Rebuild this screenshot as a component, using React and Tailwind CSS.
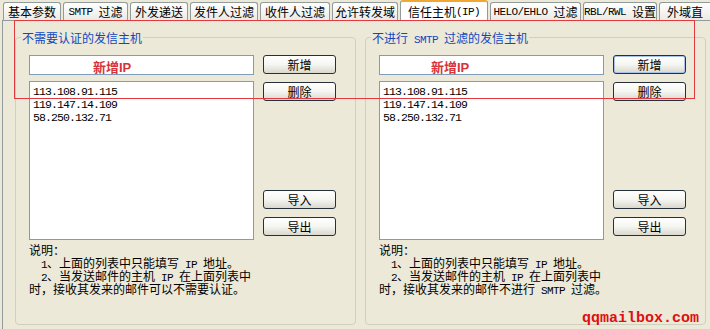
import React from "react";

const L = ({ children }) => (
  <span className="font-['Liberation_Mono'] text-[11px] leading-[10px] tracking-[-0.6px] whitespace-pre">{children}</span>
);

function Tab({ w, active, children }) {
  if (active) {
    return (
      <div
        className={`${w} shrink-0 h-[21px] -mb-px relative z-10 bg-white border border-b-0 border-[#919b9c] border-t-2 border-t-[#f0a830] rounded-t-[3px] flex items-center justify-center text-[12px] leading-[14px] whitespace-nowrap`}
      >
        {children}
      </div>
    );
  }
  return (
    <div
      className={`${w} shrink-0 h-[18px] bg-linear-to-b from-white to-[#ebeae4] border border-b-0 border-[#919b9c] rounded-t-[3px] flex items-center justify-center text-[12px] leading-[14px] whitespace-nowrap overflow-hidden`}
    >
      {children}
    </div>
  );
}

function Btn({ children, def }) {
  return (
    <div
      className={`h-[19px] w-[73px] rounded-[3px] border border-[#25303a] bg-linear-to-b from-white via-[#f5f5f1] to-[#dad8ce] text-[12px] leading-[17px] text-center ${
        def ? "shadow-[inset_0_0_0_1px_#a9c2ec]" : ""
      }`}
    >
      {children}
    </div>
  );
}

function Line({ children, indent }) {
  return (
    <div className={`h-[13px] leading-[13px] whitespace-nowrap ${indent ? "pl-[12px]" : ""}`}>{children}</div>
  );
}

function Group({ title, padIP, lastLine, def }) {
  return (
    <fieldset className="w-[341px] h-[295px] border border-[#d0d0bf] rounded-[4px]">
      <legend className="ml-[5px] px-[1px] h-[15px] text-[12px] leading-[15px] text-[#1048c0] whitespace-nowrap">
        {title}
      </legend>
      <div className="flex gap-[9px] pl-[13px] pt-[10px]">
        <div className="w-[225px] flex flex-col">
          <div className={`h-[20px] border border-[#7f9db9] bg-white ${padIP}`}>
            <div className="pt-[5px] text-[13px] leading-[14px] font-bold text-[#d8323a] font-['Liberation_Sans','Noto_Sans_CJK_SC',sans-serif] whitespace-nowrap">
              新增IP
            </div>
          </div>
          <div className="mt-[6px] h-[159px] border border-[#7f9db9] bg-white pl-[3px] pt-[3px] font-['Liberation_Mono',monospace] text-[11.5px] tracking-[-0.9px] leading-[13px]">
            <div>113.108.91.115</div>
            <div>119.147.14.109</div>
            <div>58.250.132.71</div>
          </div>
          <div className="mt-[3px] text-[12px]">
            <Line>说明：</Line>
            <Line indent>
              <L>1</L>、上面的列表中只能填写<L> IP </L>地址。
            </Line>
            <Line indent>
              <L>2</L>、当发送邮件的主机<L> IP </L>在上面列表中
            </Line>
            <Line>{lastLine}</Line>
          </div>
        </div>
        <div className="flex flex-col">
          <Btn def={def}>新增</Btn>
          <div className="mt-[8px]">
            <Btn>删除</Btn>
          </div>
          <div className="mt-[89px]">
            <Btn>导入</Btn>
          </div>
          <div className="mt-[8px]">
            <Btn>导出</Btn>
          </div>
        </div>
      </div>
    </fieldset>
  );
}

export default function App() {
  return (
    <div className="w-[710px] h-[329px] bg-[#ece9d8] overflow-hidden relative text-black font-['Noto_Sans_CJK_SC',sans-serif]">
      <div className="flex items-end h-[20px] pl-[3px] gap-[2px]">
        <Tab w="w-[58px]">基本参数</Tab>
        <Tab w="w-[65px]">
          <L>SMTP </L>过滤
        </Tab>
        <Tab w="w-[58px]">外发递送</Tab>
        <Tab w="w-[68px]">发件人过滤</Tab>
        <Tab w="w-[70px]">收件人过滤</Tab>
        <Tab w="w-[66px]">允许转发域</Tab>
        <Tab w="w-[88px]" active>
          信任主机<L>(IP)</L>
        </Tab>
        <Tab w="w-[91px]">
          <L>HELO/EHLO </L>过滤
        </Tab>
        <Tab w="w-[74px]">
          <L>RBL/RWL </L>设置
        </Tab>
        <Tab w="w-[70px]">
          <span className="pr-[18px]">外域直</span>
        </Tab>
      </div>
      <div className="ml-[2px] border-l border-t border-[#919b9c] h-[309px] flex gap-[9px] pl-[12px] pt-[9px]">
        <Group
          title="不需要认证的发信主机"
          padIP="pl-[63px]"
          lastLine="时，接收其发来的邮件可以不需要认证。"
        />
        <Group
          def
          title={
            <>
              不进行<L> SMTP </L>过滤的发信主机
            </>
          }
          padIP="pl-[51px]"
          lastLine={
            <>
              时，接收其发来的邮件不进行<L> SMTP </L>过滤。
            </>
          }
        />
      </div>
      <div className="absolute left-[14px] top-[20px] w-[681px] h-[79px] border border-[#e0393e] pointer-events-none z-20"></div>
      <div className="absolute left-[582px] top-[310px] text-[15px] leading-[18px] font-bold text-[#e01010] font-['Liberation_Mono',monospace]">
        qqmailbox.com
      </div>
    </div>
  );
}
